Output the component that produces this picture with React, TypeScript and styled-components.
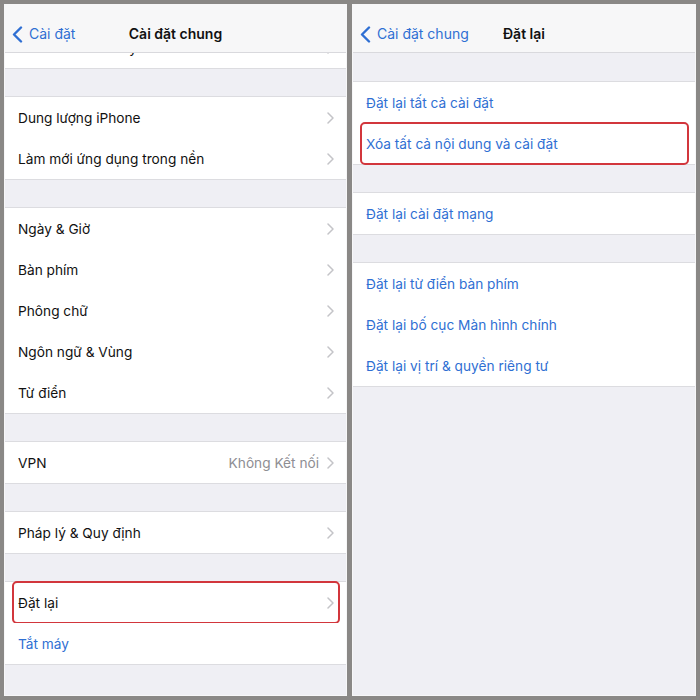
import styled, { createGlobalStyle } from "styled-components";

const GlobalStyle = createGlobalStyle`
  html, body {
    margin: 0;
    padding: 0;
    background: #8a8886;
  }
  * {
    box-sizing: border-box;
  }
`;

type Item = {
  label: string;
  value?: string;
  blue?: boolean;
  chevron?: boolean;
  highlighted?: boolean;
};

const leftGroups: Item[][] = [
  [
    { label: "Dung lượng iPhone", chevron: true },
    { label: "Làm mới ứng dụng trong nền", chevron: true },
  ],
  [
    { label: "Ngày & Giờ", chevron: true },
    { label: "Bàn phím", chevron: true },
    { label: "Phông chữ", chevron: true },
    { label: "Ngôn ngữ & Vùng", chevron: true },
    { label: "Từ điển", chevron: true },
  ],
  [{ label: "VPN", value: "Không Kết nối", chevron: true }],
  [{ label: "Pháp lý & Quy định", chevron: true }],
  [
    { label: "Đặt lại", chevron: true, highlighted: true },
    { label: "Tắt máy", blue: true },
  ],
];

const rightGroups: Item[][] = [
  [
    { label: "Đặt lại tất cả cài đặt", blue: true },
    { label: "Xóa tất cả nội dung và cài đặt", blue: true, highlighted: true },
  ],
  [{ label: "Đặt lại cài đặt mạng", blue: true }],
  [
    { label: "Đặt lại từ điển bàn phím", blue: true },
    { label: "Đặt lại bố cục Màn hình chính", blue: true },
    { label: "Đặt lại vị trí & quyền riêng tư", blue: true },
  ],
];

function BackIcon() {
  return (
    <svg width="11" height="17" viewBox="0 0 11 17">
      <path
        d="M9 1.5 L2 8.5 L9 15.5"
        fill="none"
        stroke="#2f6fd3"
        strokeWidth="2.4"
        strokeLinecap="round"
        strokeLinejoin="round"
      />
    </svg>
  );
}

function Chevron() {
  return (
    <svg width="7" height="12" viewBox="0 0 7 12">
      <path
        d="M1 1 L6 6 L1 11"
        fill="none"
        stroke="#c4c4c8"
        strokeWidth="1.5"
        strokeLinecap="round"
        strokeLinejoin="round"
      />
    </svg>
  );
}

function Groups({ groups }: { groups: Item[][] }) {
  return (
    <>
      {groups.map((group, gi) => (
        <Group key={gi}>
          {group.map((item) => (
            <Row key={item.label} $highlighted={item.highlighted}>
              <Label $blue={item.blue}>{item.label}</Label>
              {item.value && <Value>{item.value}</Value>}
              {item.chevron && <Chevron />}
            </Row>
          ))}
        </Group>
      ))}
    </>
  );
}

export default function App() {
  return (
    <>
      <GlobalStyle />
      <Frame>
        <Panel>
          <NavBar>
            <Back>
              <BackIcon />
              <span>Cài đặt</span>
            </Back>
            <Title>Cài đặt chung</Title>
          </NavBar>
          <Scroll>
            <CutGroup>
              <Row>
                <Label>Handoff &amp; CarPlay</Label>
                <Chevron />
              </Row>
            </CutGroup>
            <Groups groups={leftGroups} />
          </Scroll>
        </Panel>
        <Panel>
          <NavBar>
            <Back>
              <BackIcon />
              <span>Cài đặt chung</span>
            </Back>
            <Title>Đặt lại</Title>
          </NavBar>
          <Scroll>
            <Groups groups={rightGroups} />
          </Scroll>
        </Panel>
      </Frame>
    </>
  );
}

const Frame = styled.div`
  width: 700px;
  height: 700px;
  padding: 4px;
  display: grid;
  grid-template-columns: 343px 344px;
  gap: 5px;
  background: #8a8886;
  font-family: Inter, "Noto Sans", "Liberation Sans", sans-serif;
`;

const Panel = styled.div`
  display: flex;
  flex-direction: column;
  background: #efeff4;
  border: 1px solid #f7f7f8;
  overflow: hidden;
`;

const NavBar = styled.div`
  position: relative;
  height: 48px;
  flex-shrink: 0;
  display: flex;
  align-items: flex-end;
  justify-content: center;
  padding-bottom: 9px;
  background: #f7f7f8;
  border-bottom: 1px solid #d9d9dd;
`;

const Back = styled.div`
  position: absolute;
  left: 7px;
  bottom: 9px;
  display: flex;
  align-items: center;
  gap: 6px;
  color: #2f6fd3;
  font-size: 14px;
  line-height: 18px;
`;

const Title = styled.div`
  font-size: 14px;
  font-weight: 600;
  color: #111;
  line-height: 18px;
`;

const Scroll = styled.div`
  flex: 1;
  overflow: hidden;
  display: flex;
  flex-direction: column;
`;

const Group = styled.div`
  margin-top: 29px;
  background: #fff;
  box-shadow: 0 -1px 0 #dcdce0, 0 1px 0 #dcdce0;
`;

const CutGroup = styled(Group)`
  margin-top: -26px;
  box-shadow: 0 1px 0 #dcdce0;
`;

const Row = styled.div<{ $highlighted?: boolean }>`
  position: relative;
  height: 41px;
  flex-shrink: 0;
  display: flex;
  align-items: center;
  gap: 8px;
  padding: 0 12px 0 13px;

  & + & {
    box-shadow: inset 13px 1px 0 #fff, inset 0 1px 0 #dcdce0;
  }

  &::after {
    content: "";
    display: ${(p) => (p.$highlighted ? "block" : "none")};
    position: absolute;
    top: -1px;
    bottom: -1px;
    left: 7px;
    right: 6px;
    border: 2px solid #d2363c;
    border-radius: 5px;
  }
`;

const Label = styled.span<{ $blue?: boolean }>`
  flex: 1;
  font-size: 13.7px;
  color: ${(p) => (p.$blue ? "#2f6fd3" : "#111")};
  white-space: nowrap;
`;

const Value = styled.span`
  font-size: 13.7px;
  color: #8e8e93;
`;
